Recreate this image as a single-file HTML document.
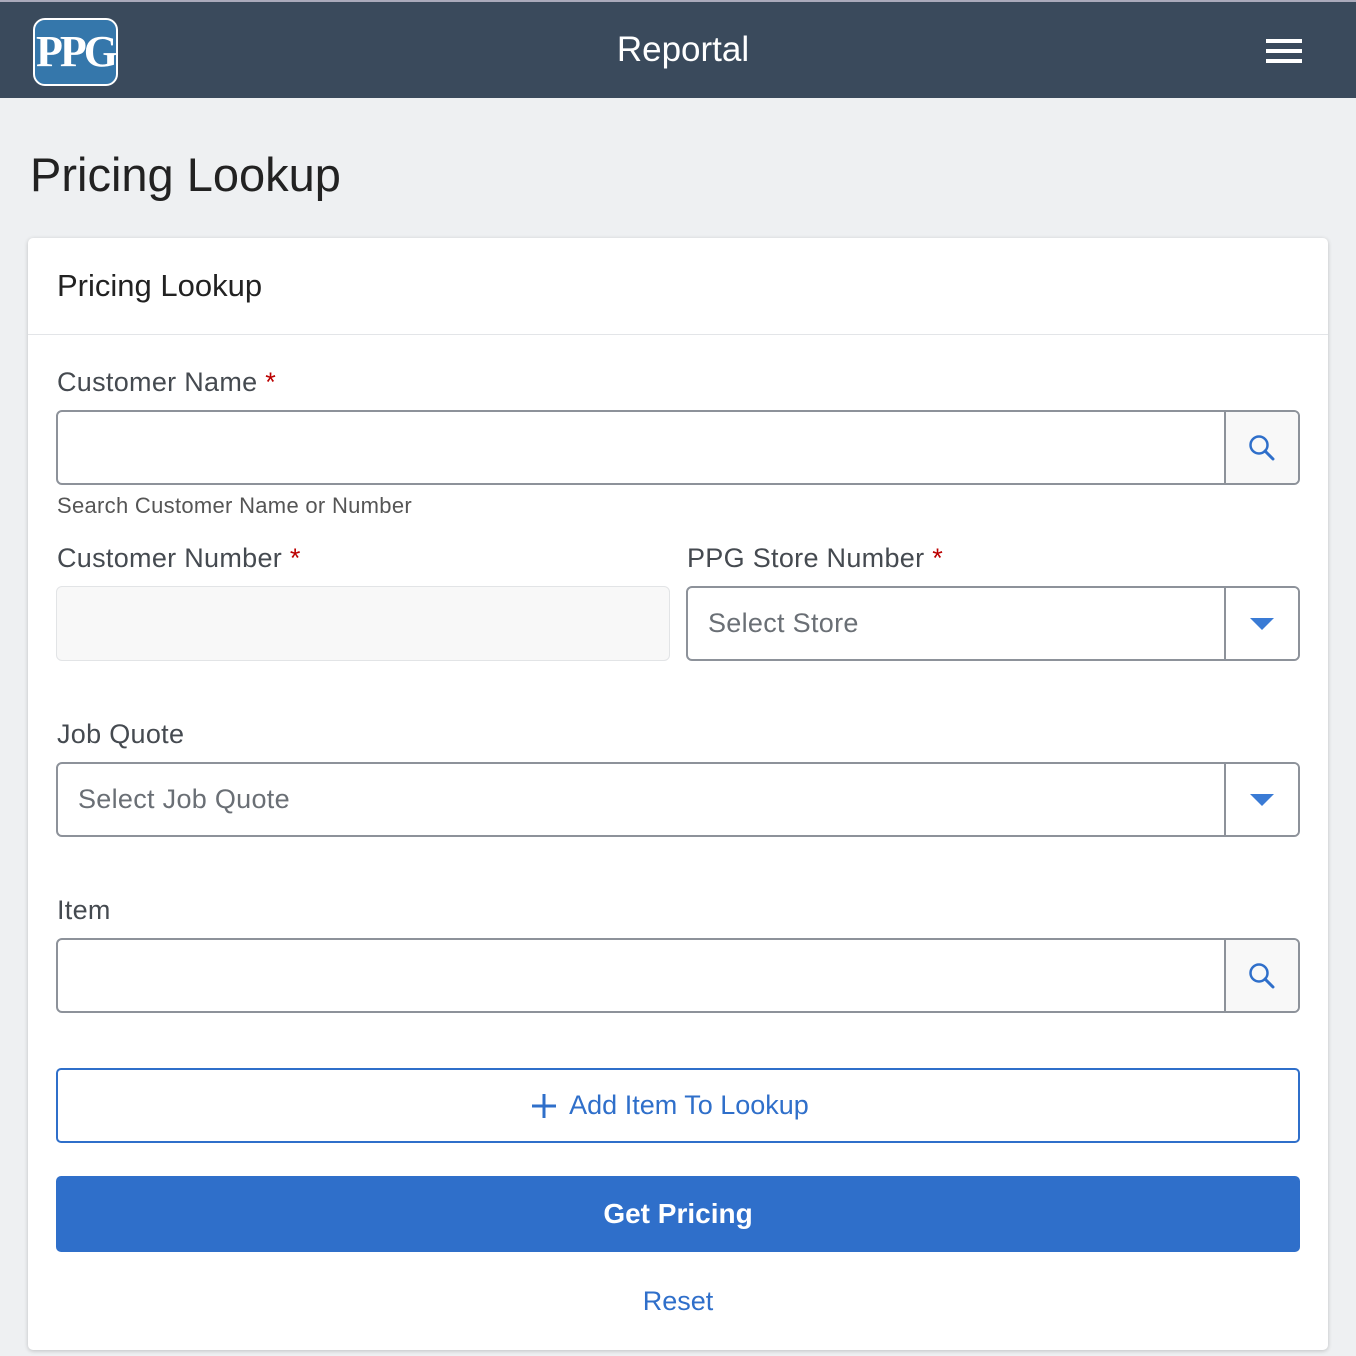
<!DOCTYPE html>
<html><head><style>
*{box-sizing:border-box;margin:0;padding:0}
body{width:1356px;height:1356px;background:#eef0f2;font-family:"Liberation Sans",sans-serif;overflow:hidden;position:relative}
.hdr{position:absolute;left:0;top:0;width:1356px;height:98px;background:#3a4a5c;border-top:2px solid #aab}
.logo{position:absolute;left:33px;top:16px;width:85px;height:68px;background:#3577ab;border:2px solid #fff;border-radius:12px;color:#fff;font-family:"Liberation Serif",serif;font-weight:bold;font-size:44px;text-align:center;line-height:64px;letter-spacing:-3px}
.title{position:absolute;left:0;width:1356px;top:28px;text-align:center;color:#fff;font-size:35px;padding-left:10px}
.ham{position:absolute;left:1266px;width:36px;height:4px;background:#fff}
h1{position:absolute;left:30px;top:147px;font-size:47px;font-weight:normal;color:#222}
.card{position:absolute;left:28px;top:238px;width:1300px;height:1112px;background:#fff;border-radius:5px;box-shadow:0 1px 4px rgba(0,0,0,.2)}
.ch{height:97px;border-bottom:1px solid #e3e5e8;padding:30px 0 0 29px;font-size:31px;color:#222}
.lbl{position:absolute;font-size:27px;color:#454a50;letter-spacing:0.3px}
.req{color:#b00}
.inp{position:absolute;height:75px;border:2px solid #8d929a;border-radius:6px;background:#fff;overflow:hidden}
.btn{position:absolute;right:0;top:0;width:74px;height:100%;background:#f8f8f8;border-left:2px solid #8d929a;display:flex;align-items:center;justify-content:center}
.ph{position:absolute;left:20px;top:20px;font-size:27px;color:#6a6f75;letter-spacing:0.3px}
.tri{width:0;height:0;border-left:12px solid transparent;border-right:12px solid transparent;border-top:12px solid #3a7bd5}
</style></head><body>
<div class="hdr"><div class="logo">PPG</div><div class="title">Reportal</div>
<div class="ham" style="top:37px"></div><div class="ham" style="top:47px"></div><div class="ham" style="top:57px"></div></div>
<h1>Pricing Lookup</h1>
<div class="card"><div class="ch">Pricing Lookup</div>
<div class="lbl" style="left:29px;top:129px">Customer Name <span class="req">*</span></div>
<div class="inp" style="left:28px;top:172px;width:1244px"><div class="btn"><svg width="28" height="28" viewBox="0 0 28 28"><circle cx="11" cy="11" r="8.5" fill="none" stroke="#2f6fca" stroke-width="2.5"/><path d="M17 17l8 8" stroke="#2f6fca" stroke-width="3" stroke-linecap="round"/></svg></div></div>
<div class="lbl" style="left:29px;top:255px;font-size:22px;color:#555">Search Customer Name or Number</div>
<div class="lbl" style="left:29px;top:305px">Customer Number <span class="req">*</span></div>
<div class="inp" style="left:28px;top:348px;width:614px;background:#f8f8f8;border:1px solid #e2e4e6"></div>
<div class="lbl" style="left:659px;top:305px">PPG Store Number <span class="req">*</span></div>
<div class="inp" style="left:658px;top:348px;width:614px"><div class="ph">Select Store</div><div class="btn" style="background:#fff"><div class="tri"></div></div></div>
<div class="lbl" style="left:29px;top:481px">Job Quote</div>
<div class="inp" style="left:28px;top:524px;width:1244px"><div class="ph">Select Job Quote</div><div class="btn" style="background:#fff"><div class="tri"></div></div></div>
<div class="lbl" style="left:29px;top:657px">Item</div>
<div class="inp" style="left:28px;top:700px;width:1244px"><div class="btn"><svg width="28" height="28" viewBox="0 0 28 28"><circle cx="11" cy="11" r="8.5" fill="none" stroke="#2f6fca" stroke-width="2.5"/><path d="M17 17l8 8" stroke="#2f6fca" stroke-width="3" stroke-linecap="round"/></svg></div></div>
<div style="position:absolute;left:28px;top:830px;width:1244px;height:75px;border:2px solid #2f6fca;border-radius:5px;display:flex;align-items:center;justify-content:center;color:#2f6fca;font-size:27px;padding-right:16px"><svg width="26" height="26" viewBox="0 0 26 26" style="margin-right:12px"><path d="M13 1v24M1 13h24" stroke="#2f6fca" stroke-width="3"/></svg>Add Item To Lookup</div>
<div style="position:absolute;left:28px;top:938px;width:1244px;height:76px;background:#2f6fca;border-radius:5px;display:flex;align-items:center;justify-content:center;color:#fff;font-size:28px;font-weight:bold">Get Pricing</div>
<div style="position:absolute;left:0;width:1300px;top:1048px;text-align:center;color:#2f6fca;font-size:27px">Reset</div>
</div>
</body></html>
